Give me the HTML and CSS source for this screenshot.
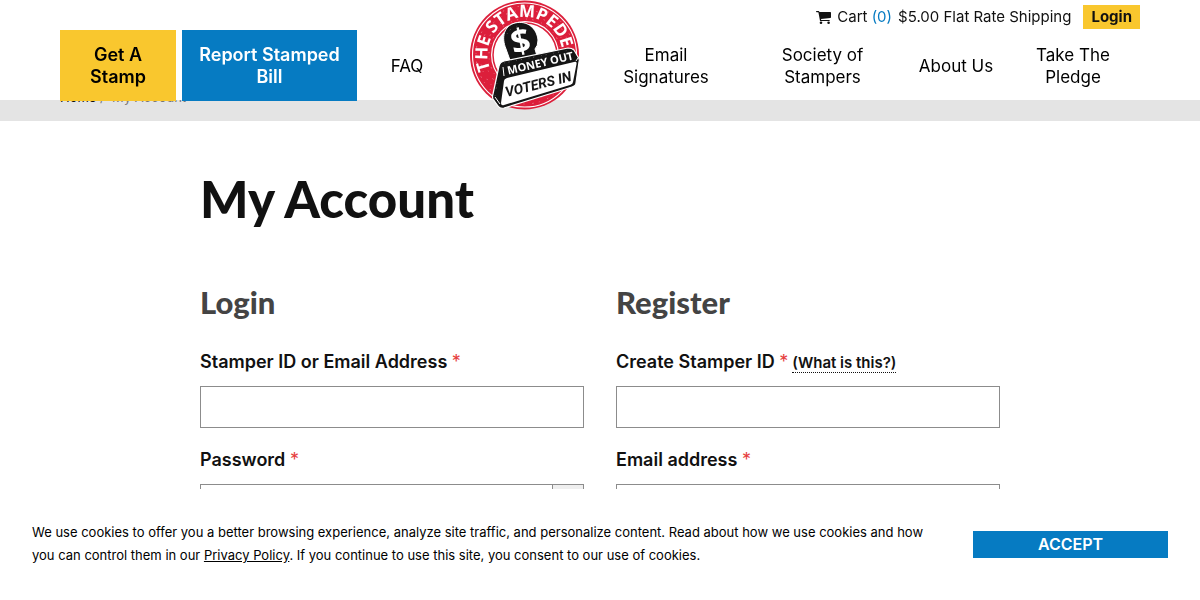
FILE: index.html
```html
<!DOCTYPE html>
<html lang="en">
<head>
<meta charset="utf-8">
<meta name="viewport" content="width=device-width, initial-scale=1">
<title>My Account</title>
<link rel="stylesheet" href="styles.css">
</head>
<body>
<header class="site-header">
  <div class="header-inner">
    <div class="utility">
      <a class="cart" href="#cart">
        <svg class="cart-icon" viewBox="0 0 15 13" aria-hidden="true"><path d="M0 .6Q0 0 .6 0H2.600Q3.200 0 3.400 1H14.300Q15 1 15 1.700V6.300Q15 6.900 14.300 7L5 8.100L5.200 9H13.200Q13.800 9 13.800 9.500T13.200 10H4.300Q3.700 10 3.900 9.200L2.400 1.200H.6Q0 1.200 0 .6Z"/><circle cx="5" cy="11.700" r="1.300"/><circle cx="12.600" cy="11.700" r="1.300"/></svg>
        <span>Cart <span class="count">(0)</span></span>
      </a>
      <span class="shipping">$5.00 Flat Rate Shipping</span>
      <a class="login-link" href="#login">Login</a>
    </div>
    <nav class="main-nav" aria-label="Main">
      <a class="nav-item nav-yellow" href="#get">Get A Stamp</a>
      <a class="nav-item nav-blue" href="#report">Report Stamped Bill</a>
      <a class="nav-item" href="#faq">FAQ</a>
      <a class="nav-item nav-logo" href="#home" aria-label="The Stampede">
        <svg class="logo" viewBox="0 0 110 110" aria-hidden="true">
          <defs><path id="ring" d="M20.500 69.500A37.500 37.500 0 1 1 91.500 63"/></defs>
          <circle cx="54.500" cy="55" r="54.500" fill="#dc1f3b"/>
          <circle cx="54.500" cy="55" r="52" fill="none" stroke="#fff" stroke-width="1.100"/>
          <circle cx="55" cy="55" r="34" fill="#fff"/>
          <circle cx="55" cy="55" r="32" fill="none" stroke="#dc1f3b" stroke-width="1.500"/>
          <g fill="none" stroke="#fff" stroke-width=".7" stroke-dasharray=".8 5.300 1.400 8" opacity=".55"><circle cx="55" cy="55" r="49"/><circle cx="55" cy="55" r="45"/><circle cx="55" cy="55" r="40"/><circle cx="55" cy="55" r="36"/></g>
          <text class="ring-text"><textPath href="#ring" startOffset="0">THE STAMPEDE</textPath></text>
          <path d="M36 49C31 37 34 26 45 23C58 20 67 29 68 40Q68 46 65 49L67 56L41 63Z" fill="#151515" stroke="#fff" stroke-width="1"/>
          <text class="dollar" x="51" y="53" transform="rotate(-12 51 43)">$</text>
          <path d="M29 66Q30 62 34 61L98 48Q102 48 104 50L108 57Q110 59 109 62L106 83Q106 86 102 87L34 108Q30 109 28 106L23 99Q22 97 23 94Z" fill="#151515" stroke="#fff" stroke-width="1.200"/>
          <path d="M37 78L104 62Q107 61 106.500 64L103 82Q103 84 100 85L34 105Q31 106 31 103L34 81Q34 79 37 78Z" fill="#fff"/>
          <path d="M33 67L34 76M106 61L108 58M25 97L30 104" stroke="#fff" stroke-width="1"/>
          <g fill="none" stroke="#fff" stroke-width=".6" stroke-dasharray=".6 4 1 7" opacity=".6"><path d="M34 63L100 50M27 83L25 96M37 34Q41 27 48 26"/></g>
          <text class="banner-top" x="70" y="67" transform="rotate(-13 70 62)">MONEY OUT</text>
          <text class="banner-bottom" x="68" y="89" transform="rotate(-14 68 83)">VOTERS IN</text>
        </svg>
      </a>
      <a class="nav-item" href="#signatures">Email Signatures</a>
      <a class="nav-item" href="#society">Society of Stampers</a>
      <a class="nav-item" href="#about">About Us</a>
      <a class="nav-item" href="#pledge">Take The Pledge</a>
    </nav>
  </div>
</header>

<div class="breadcrumb-bar">
  <nav class="breadcrumb" aria-label="Breadcrumb"><a href="#home">Home</a> <span>/ &nbsp;My Account</span></nav>
</div>

<main class="content">
  <h1>My Account</h1>
  <div class="forms">
    <form class="form">
      <h2>Login</h2>
      <div class="field">
        <label for="login-id">Stamper ID or Email Address <span class="required">*</span></label>
        <input id="login-id" type="text">
      </div>
      <div class="field">
        <label for="login-password">Password <span class="required">*</span></label>
        <div class="password">
          <input id="login-password" type="password">
          <button class="reveal" type="button" aria-label="Show password"></button>
        </div>
      </div>
    </form>
    <form class="form">
      <h2>Register</h2>
      <div class="field">
        <div class="label-row">
          <label for="register-id">Create Stamper ID <span class="required">*</span></label>
          <a class="hint" href="#what">(What is this?)</a>
        </div>
        <input id="register-id" type="text">
      </div>
      <div class="field">
        <label for="register-email">Email address <span class="required">*</span></label>
        <input id="register-email" type="email">
      </div>
    </form>
  </div>
</main>

<aside class="cookie-bar" aria-label="Cookie notice">
  <p>We use cookies to offer you a better browsing experience, analyze site traffic, and personalize content. Read about how we use cookies and how you can control them in our <a href="#privacy">Privacy Policy</a>. If you continue to use this site, you consent to our use of cookies.</p>
  <button class="accept" type="button">ACCEPT</button>
</aside>
</body>
</html>
```
FILE: styles.css
```css
* { box-sizing: border-box; }

body {
  margin: 0;
  padding-top: 88px;
  background: #fff;
  color: #111;
  font-family: Inter, "Liberation Sans", sans-serif;
  font-size: 17px;
}

a { color: inherit; text-decoration: none; }

.site-header {
  position: fixed;
  top: 0;
  left: 0;
  right: 0;
  z-index: 2;
  height: 100px;
  background: #fff;
}

.header-inner {
  max-width: 1080px;
  margin: 0 auto;
}

.utility {
  display: flex;
  justify-content: flex-end;
  align-items: center;
  height: 30px;
  padding-top: 4px;
  font-size: 15px;
  line-height: 24px;
}

.cart { display: flex; align-items: center; gap: 6px; }
.cart-icon { width: 15px; height: 13px; fill: #111; }
.count { color: #067bc2; }
.shipping { margin: 0 12px 0 6px; }

.login-link {
  padding: 0 8px;
  background: #f9c72e;
  font-weight: 700;
}

.main-nav {
  display: grid;
  grid-template-columns: 116fr 175fr 88fr 136fr 134fr 167fr 88fr 134fr;
  gap: 6px;
  color: #000;
  line-height: 22px;
  text-align: center;
}

.nav-item {
  display: flex;
  align-items: center;
  justify-content: center;
  min-width: 0;
  height: 71px;
  padding: 0 6px;
}

.nav-yellow,
.nav-blue {
  padding: 0 16px;
  font-size: 18px;
  font-weight: 600;
}
.nav-yellow { background: #f9c72e; }
.nav-blue { background: #067bc2; color: #fff; }

.nav-logo { align-items: flex-end; height: 80px; }
.logo { flex: none; width: 110px; height: 110px; }

.logo text { fill: #fff; font-family: "Open Sans", sans-serif; font-weight: 700; }
.logo .ring-text { font-size: 17px; }
.logo .dollar { font-size: 34px; text-anchor: middle; }
.logo .banner-top { font-size: 11px; text-anchor: middle; }
.logo .banner-bottom { fill: #151515; font-family: Roboto, sans-serif; font-size: 14px; font-style: italic; text-anchor: middle; }

.breadcrumb-bar { height: 33px; background: #e4e4e4; }

.breadcrumb {
  max-width: 1080px;
  margin: 0 auto;
  color: #777;
  font-size: 13px;
  line-height: 18px;
}
.breadcrumb a { color: #111; }

.content {
  max-width: 832px;
  margin: 0 auto;
  padding: 48px 16px 32px;
}

h1, h2 { margin: 0; font-family: Lato, sans-serif; font-weight: 900; }
h1 { font-size: 51px; line-height: 60px; }
h2 { margin-bottom: 30px; color: #444; font-size: 31px; line-height: 36px; }

.forms {
  display: grid;
  grid-template-columns: 1fr 1fr;
  gap: 32px;
  margin-top: 55px;
}

.field + .field { margin-top: 20px; }

label {
  display: block;
  padding-bottom: 12px;
  font-size: 18px;
  font-weight: 600;
  line-height: 24px;
}
.required { color: #e63e3e; font-weight: 400; }

.label-row { display: flex; gap: 4px; }

.hint {
  align-self: flex-start;
  margin-top: 4px;
  border-bottom: 1px dotted #111;
  font-size: 15px;
  font-weight: 600;
  line-height: 18px;
}

input {
  display: block;
  width: 100%;
  height: 42px;
  padding: 0 12px;
  border: 1px solid #8c8c8c;
  border-radius: 0;
  background: #fff;
  font: inherit;
}

.password { display: flex; }
.reveal {
  width: 31px;
  padding: 0;
  border: 1px solid #8c8c8c;
  border-left: 0;
  background: #efefef;
}
.password input { flex: 1; }

.cookie-bar {
  position: fixed;
  right: 0;
  bottom: 0;
  left: 0;
  z-index: 3;
  display: flex;
  align-items: center;
  justify-content: space-between;
  gap: 32px;
  padding: 32px 32px 33px;
  background: #fff;
  color: #000;
  font-size: 13px;
  line-height: 23px;
}
.cookie-bar p { flex: 1; margin: 0; }
.cookie-bar a { text-decoration: underline; }

.accept {
  flex: none;
  width: 195px;
  padding: 0;
  border: 0;
  background: #067bc2;
  color: #fff;
  font: 600 16px/27px Inter, sans-serif;
}
```
